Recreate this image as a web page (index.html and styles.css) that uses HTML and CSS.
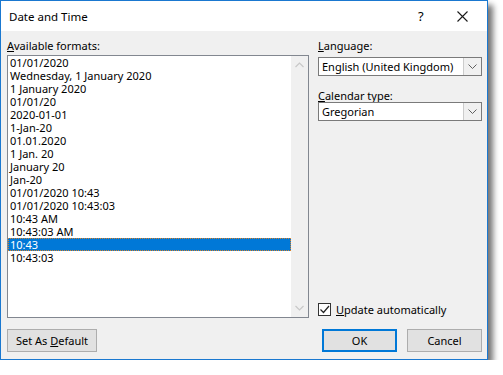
FILE: index.html
```html
<!DOCTYPE html>
<html lang="en">
<head>
    <meta charset="UTF-8">
    <title>Date and Time</title>
    <link rel="stylesheet" href="styles.css">
</head>
<body>
    <div class="window">
        <div class="titlebar">
            <span class="title">Date and Time</span>
            <span class="help">?</span>
            <span class="close">
                <svg width="11" height="11" viewBox="0 0 11 11"><path d="M0.5 0.5 L10.5 10.5 M10.5 0.5 L0.5 10.5" stroke="#1a1a1a" stroke-width="1.1" fill="none"/></svg>
            </span>
        </div>
        <div class="content">
            <div class="main">
                <div class="left">
                    <div class="label"><u>A</u>vailable formats:</div>
                    <div class="listbox">
                        <ul class="items">
                            <li>01/01/2020</li>
                            <li>Wednesday, 1 January 2020</li>
                            <li>1 January 2020</li>
                            <li>01/01/20</li>
                            <li>2020-01-01</li>
                            <li>1-Jan-20</li>
                            <li>01.01.2020</li>
                            <li>1 Jan. 20</li>
                            <li>January 20</li>
                            <li>Jan-20</li>
                            <li>01/01/2020 10:43</li>
                            <li>01/01/2020 10:43:03</li>
                            <li>10:43 AM</li>
                            <li>10:43:03 AM</li>
                            <li class="selected">10:43</li>
                            <li>10:43:03</li>
                        </ul>
                        <div class="scrollbar">
                            <svg width="9" height="6" viewBox="0 0 9 6"><path d="M0.5 5 L4.5 1 L8.5 5" stroke="#c8c8c8" stroke-width="1.2" fill="none"/></svg>
                            <svg width="9" height="6" viewBox="0 0 9 6"><path d="M0.5 1 L4.5 5 L8.5 1" stroke="#c8c8c8" stroke-width="1.2" fill="none"/></svg>
                        </div>
                    </div>
                </div>
                <div class="right">
                    <div class="label"><u>L</u>anguage:</div>
                    <div class="select">
                        <span class="value">English (United Kingdom)</span>
                        <span class="arrow"><svg width="9" height="5" viewBox="0 0 9 5"><path d="M0.5 0.5 L4.5 4.5 L8.5 0.5" stroke="#606060" stroke-width="1" fill="none"/></svg></span>
                    </div>
                    <div class="label second"><u>C</u>alendar type:</div>
                    <div class="select">
                        <span class="value">Gregorian</span>
                        <span class="arrow"><svg width="9" height="5" viewBox="0 0 9 5"><path d="M0.5 0.5 L4.5 4.5 L8.5 0.5" stroke="#606060" stroke-width="1" fill="none"/></svg></span>
                    </div>
                    <label class="check">
                        <span class="box"><svg width="11" height="11" viewBox="0 0 11 11"><path d="M1.5 5.5 L4.5 8.5 L10 2" stroke="#222" stroke-width="1.2" fill="none"/></svg></span>
                        <span><u>U</u>pdate automatically</span>
                    </label>
                </div>
            </div>
            <div class="buttons">
                <button class="btn wide">Set As <u>D</u>efault</button>
                <div class="spacer"></div>
                <button class="btn default">OK</button>
                <button class="btn">Cancel</button>
            </div>
        </div>
    </div>
</body>
</html>
```

FILE: styles.css
```css
body
{
    margin: 0;
    background: #fff;
    font-family: "Noto Sans", "Open Sans", sans-serif;
    font-size: 11px;
    color: #000;
}
.window
{
    width: 486px;
    height: 358px;
    border: 1px solid #1a78d0;
    box-shadow: 5px 5px 6px rgba(0, 0, 0, 0.55);
    display: flex;
    flex-direction: column;
    background: #f0f0f0;
}
.titlebar
{
    height: 30px;
    background: #fff;
    display: flex;
    align-items: center;
    padding-left: 8px;
    font-size: 11.5px;
}
.titlebar .title
{
    flex: 1;
}
.titlebar .help
{
    width: 14px;
    font-size: 13px;
    margin-right: 25px;
}
.titlebar .close
{
    display: flex;
    margin-right: 19px;
}
.content
{
    flex: 1;
    display: flex;
    flex-direction: column;
    padding: 7px 5px 7px 6px;
}
.main
{
    flex: 1;
    display: flex;
    gap: 9px;
}
.left
{
    width: 302px;
    display: flex;
    flex-direction: column;
}
.label
{
    line-height: 16px;
    height: 17px;
}
.listbox
{
    height: 261px;
    border: 1px solid #828790;
    background: #fff;
    display: flex;
}
.items
{
    flex: 1;
    list-style: none;
    margin: 0;
    padding: 0;
}
.items li
{
    height: 13px;
    line-height: 13px;
    padding-left: 2px;
    white-space: nowrap;
}
.items li.selected
{
    background: #0078d7;
    color: #fff;
    outline: 1px dotted #d8822a;
    outline-offset: -1px;
}
.scrollbar
{
    width: 17px;
    background: #f0f0f0;
    display: flex;
    flex-direction: column;
    justify-content: space-between;
    align-items: center;
    padding: 6px 0;
}
.right
{
    flex: 1;
    display: flex;
    flex-direction: column;
}
.right .label
{
    height: 19px;
}
.right .second
{
    margin-top: 14px;
    height: 12px;
    line-height: 12px;
}
.select
{
    height: 17px;
    border: 1px solid #7a7a7a;
    background: #fff;
    display: flex;
    align-items: center;
    white-space: nowrap;
}
.select .value
{
    flex: 1;
    padding-left: 3px;
}
.select .arrow
{
    width: 17px;
    height: 17px;
    border-left: 1px solid #cccccc;
    background: #f0f0f0;
    display: flex;
    align-items: center;
    justify-content: center;
}
.check
{
    margin-top: auto;
    margin-bottom: 1px;
    display: flex;
    align-items: center;
    gap: 5px;
}
.check .box
{
    width: 11px;
    height: 11px;
    border: 1px solid #333;
    background: #fff;
    display: flex;
}
.buttons
{
    display: flex;
    gap: 10px;
    margin-top: 11px;
}
.spacer
{
    flex: 1;
}
.btn
{
    width: 75px;
    height: 23px;
    background: #e1e1e1;
    border: 1px solid #adadad;
    font-family: inherit;
    font-size: 11px;
    padding: 0;
}
.btn.wide
{
    width: 90px;
}
.btn.default
{
    border: 2px solid #0078d7;
}
```
